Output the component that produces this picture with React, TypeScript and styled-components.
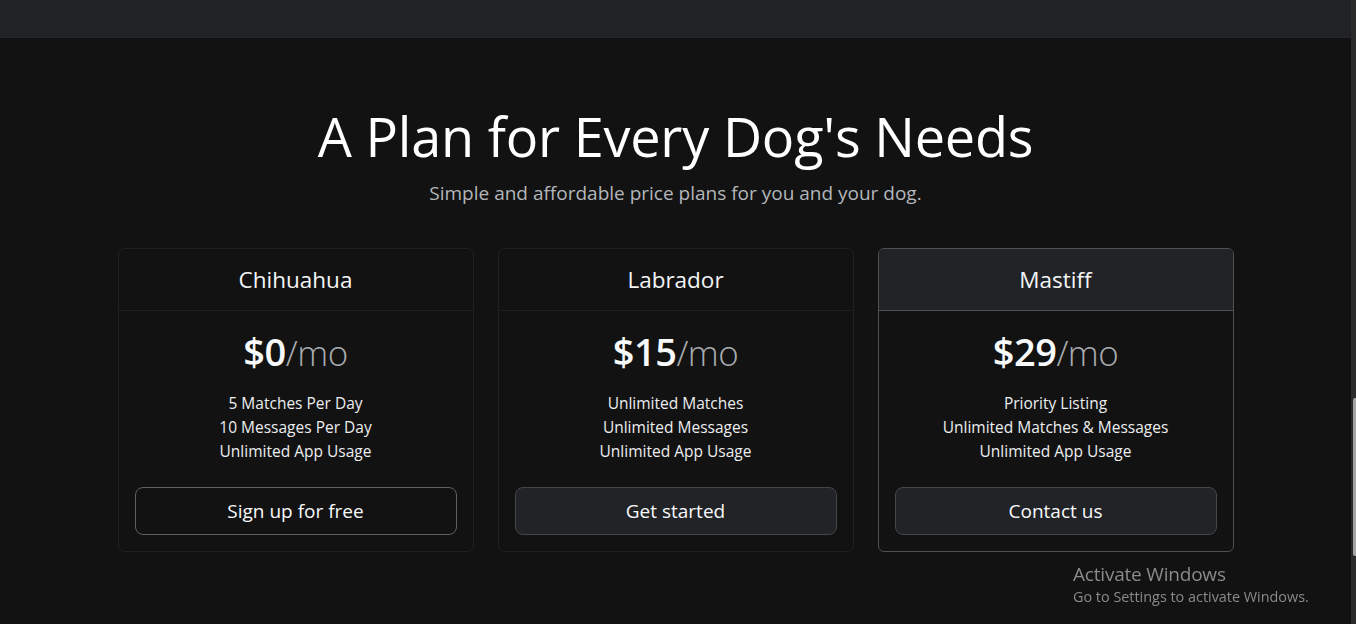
import React from "react";
import styled, { createGlobalStyle } from "styled-components";

const Global = createGlobalStyle`
  html, body { margin: 0; padding: 0; background: #121212; }
  body {
    font-family: "Open Sans", "Noto Sans", "Liberation Sans", sans-serif;
    color: #dee2e6;
    overflow: hidden;
  }
  * { box-sizing: border-box; }
`;

const Page = styled.div`
  width: 1351px;
  min-height: 624px;
  background: #121212;
`;

const TopBar = styled.div`
  height: 38px;
  background: #212225;
  border-bottom: 1px solid #26272a;
`;

const Main = styled.main`
  width: 1140px;
  margin: 0 auto;
  padding: 49px 12px 0;
`;

const Header = styled.header`
  text-align: center;
  padding: 16px 16px 24px;
`;

const Title = styled.h1`
  margin: 0 0 8px;
  font-size: 54px;
  font-weight: 400;
  line-height: 67px;
  color: #ffffff;
  letter-spacing: -0.2px;
`;

const Lead = styled.p`
  margin: 0 0 16px;
  font-size: 19px;
  line-height: 30px;
  color: #b3b7bb;
`;

const Row = styled.div`
  display: grid;
  grid-template-columns: repeat(3, 356px);
  gap: 24px;
  justify-content: center;
`;

const Card = styled.div<{ $featured?: boolean }>`
  border: 1px solid ${(p) => (p.$featured ? "#4e5054" : "#1f2022")};
  border-radius: 6px;
  overflow: hidden;
  text-align: center;
  background: #121212;
`;

const CardHeader = styled.div<{ $featured?: boolean }>`
  padding: 16px;
  background: ${(p) => (p.$featured ? "#212327" : "transparent")};
  border-bottom: 1px solid ${(p) => (p.$featured ? "#4e5054" : "#1f2022")};
`;

const PlanName = styled.h4`
  margin: 0;
  font-size: 22.5px;
  font-weight: 400;
  line-height: 29px;
  color: #f4f5f6;
`;

const Body = styled.div`
  padding: 16px;
`;

const Price = styled.h2`
  margin: 0 0 14px;
  font-size: 38px;
  line-height: 48px;
  font-weight: 600;
  color: #f8f9fa;
  letter-spacing: -0.5px;
`;

const Per = styled.small`
  font-weight: 300;
  color: #a8acb0;
  font-size: 35px;
`;

const Features = styled.ul`
  list-style: none;
  margin: 0 0 24px;
  padding: 0;
  font-size: 15.5px;
  line-height: 24px;
  color: #eceef0;
`;

const Button = styled.button<{ $solid?: boolean }>`
  display: block;
  width: 100%;
  height: 48px;
  border-radius: 8px;
  border: 1px solid ${(p) => (p.$solid ? "#43464a" : "#5d6064")};
  background: ${(p) => (p.$solid ? "#212327" : "transparent")};
  color: #f8f9fa;
  font-family: inherit;
  font-size: 19px;
  cursor: pointer;
`;

const Watermark = styled.div`
  position: fixed;
  left: 1073px;
  top: 562px;
  color: #8a8a8a;
  font-family: "Open Sans", "Noto Sans", sans-serif;
  pointer-events: none;
`;

const WmTitle = styled.div`
  font-size: 19px;
  line-height: 25px;
  letter-spacing: -0.2px;
`;

const WmSub = styled.div`
  font-size: 14.4px;
  line-height: 20px;
`;

const ScrollTrack = styled.div`
  position: fixed;
  top: 0;
  right: 0;
  width: 5px;
  height: 624px;
  background: #2b2b2b;
`;

const ScrollThumb = styled.div`
  position: absolute;
  left: 2px;
  right: 0;
  top: 398px;
  height: 158px;
  background: #a3a3a3;
  border-radius: 2px 0 0 2px;
`;

const plans = [
  {
    name: "Chihuahua",
    price: "$0",
    features: ["5 Matches Per Day", "10 Messages Per Day", "Unlimited App Usage"],
    cta: "Sign up for free",
    solid: false,
    featured: false,
  },
  {
    name: "Labrador",
    price: "$15",
    features: ["Unlimited Matches", "Unlimited Messages", "Unlimited App Usage"],
    cta: "Get started",
    solid: true,
    featured: false,
  },
  {
    name: "Mastiff",
    price: "$29",
    features: ["Priority Listing", "Unlimited Matches & Messages", "Unlimited App Usage"],
    cta: "Contact us",
    solid: true,
    featured: true,
  },
];

export default function App() {
  return (
    <>
      <Global />
      <Page>
        <TopBar />
        <Main>
          <Header>
            <Title>A Plan for Every Dog's Needs</Title>
            <Lead>Simple and affordable price plans for you and your dog.</Lead>
          </Header>
          <Row>
            {plans.map((p) => (
              <Card key={p.name} $featured={p.featured}>
                <CardHeader $featured={p.featured}>
                  <PlanName>{p.name}</PlanName>
                </CardHeader>
                <Body>
                  <Price>
                    {p.price}
                    <Per>/mo</Per>
                  </Price>
                  <Features>
                    {p.features.map((f) => (
                      <li key={f}>{f}</li>
                    ))}
                  </Features>
                  <Button $solid={p.solid}>{p.cta}</Button>
                </Body>
              </Card>
            ))}
          </Row>
        </Main>
      </Page>
      <Watermark>
        <WmTitle>Activate Windows</WmTitle>
        <WmSub>Go to Settings to activate Windows.</WmSub>
      </Watermark>
      <ScrollTrack>
        <ScrollThumb />
      </ScrollTrack>
    </>
  );
}
